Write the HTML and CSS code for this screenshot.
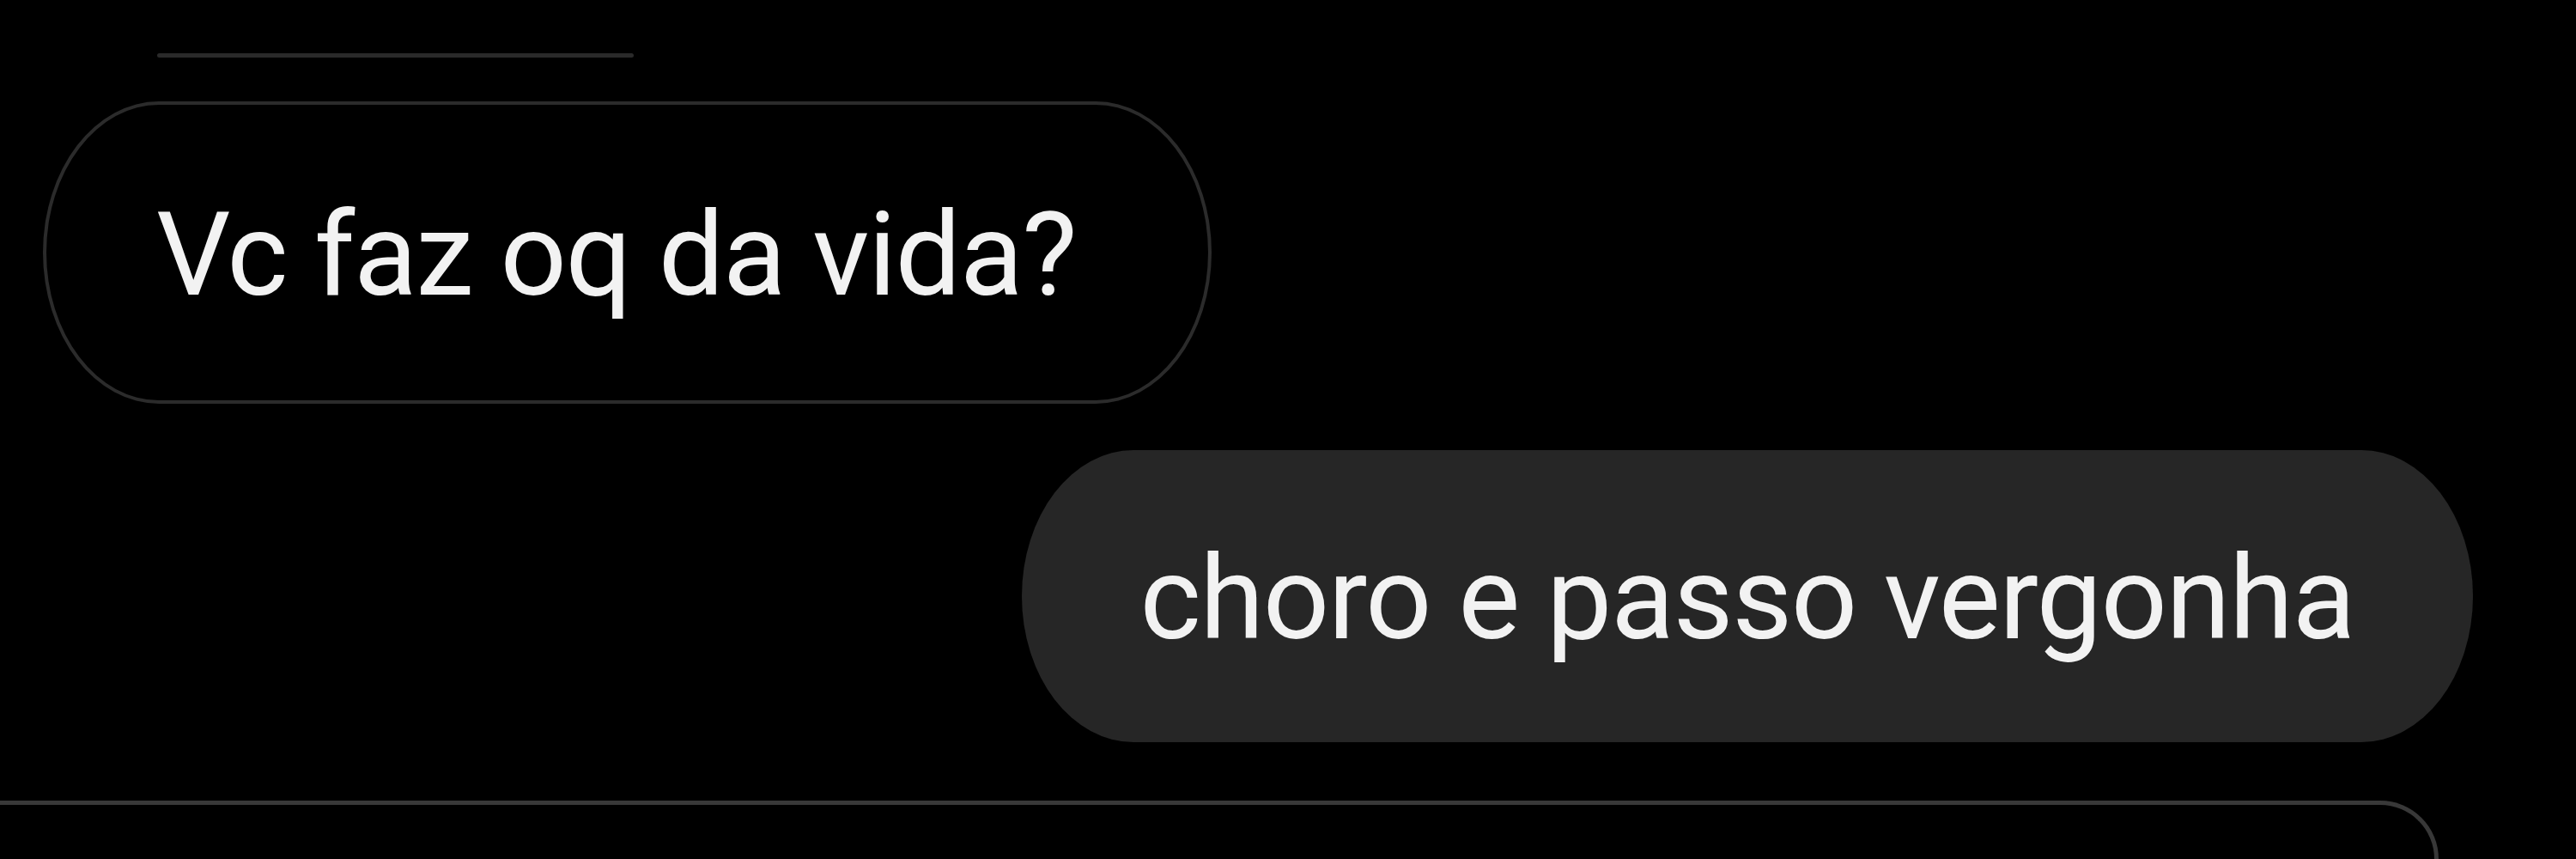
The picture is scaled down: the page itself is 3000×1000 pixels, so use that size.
FILE: index.html
```html
<!DOCTYPE html>
<html>
<head>
    <title>Conversa</title>
    <link rel="stylesheet" href="styles.css">
</head>
<body>
    <div class="thread">
        <!-- bottom edge of the previous message, scrolled off the top -->
        <div class="prev-edge"></div>

        <!-- Received message -->
        <div class="row received">
            <div class="bubble bubble-outline">Vc faz oq da vida?</div>
        </div>

        <!-- Sent message -->
        <div class="row sent">
            <div class="bubble bubble-filled">choro e passo vergonha</div>
        </div>

        <!-- Message input box (top edge only visible) -->
        <div class="composer"></div>
    </div>
</body>
</html>
```

FILE: styles.css
```css
html, body {
    margin: 0;
    padding: 0;
    background-color: #000;
    overflow: hidden;
}

body {
    font-family: Roboto, "Liberation Sans", sans-serif;
    color: #f2f2f2;
}

.thread {
    display: flex;
    flex-direction: column;
    padding-top: 62px;
    height: 1000px;
    box-sizing: border-box;
}

.prev-edge {
    width: 555px;
    height: 5px;
    margin-left: 183px;
    background-color: #2a2a2a;
    border-radius: 3px;
}

.row {
    display: flex;
}

.received {
    margin-top: 51px;
    padding-left: 50px;
}

.sent {
    margin-top: 54px;
    justify-content: flex-end;
    padding-right: 120px;
}

/* Common bubble styles */
.bubble {
    display: flex;
    align-items: center;
    box-sizing: border-box;
    font-size: 136px;
    letter-spacing: -1.5px;
    line-height: 1;
    white-space: nowrap;
}

.bubble-outline {
    height: 352px;
    padding: 6px 154px 0 128px;
    border: 4px solid #2b2b2b;
    border-radius: 135px / 176px;
}

.bubble-filled {
    height: 340px;
    padding: 6px 138px 0 138px;
    background-color: #262626;
    border-radius: 130px / 170px;
}

.composer {
    margin-top: 68px;
    margin-right: 160px;
    flex: 1;
    border-top: 5px solid #383838;
    border-right: 5px solid #383838;
    border-top-right-radius: 140px;
}
```
